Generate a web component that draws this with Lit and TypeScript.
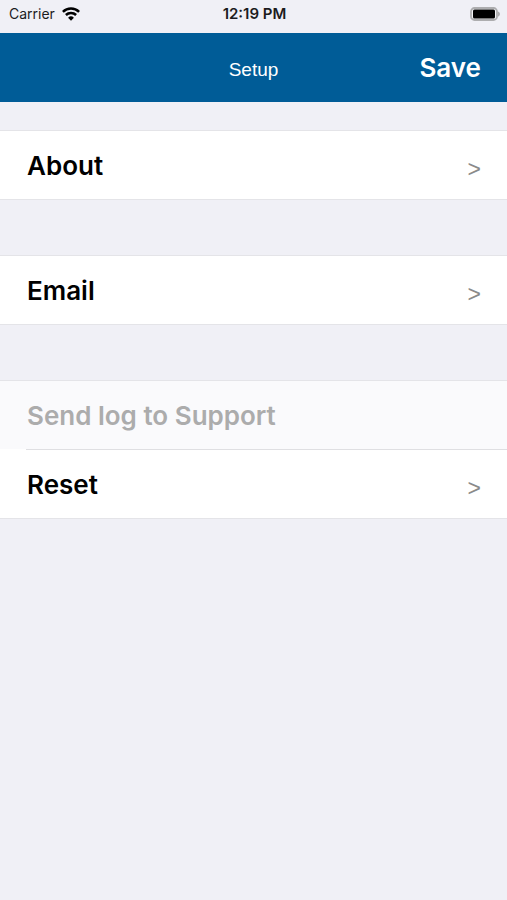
import { LitElement, html, css, nothing } from "lit";
import { customElement } from "lit/decorators.js";

interface Item {
  label: string;
  disabled?: boolean;
}

const groups: Item[][] = [
  [{ label: "About" }],
  [{ label: "Email" }],
  [{ label: "Send log to Support", disabled: true }, { label: "Reset" }],
];

@customElement("status-bar")
class StatusBar extends LitElement {
  static styles = css`
    :host {
      display: grid;
      grid-template-columns: 1fr auto 1fr;
      align-items: center;
      height: 33px;
      padding: 0 7px 6px 9px;
      box-sizing: border-box;
      font-size: 14px;
      line-height: 20px;
      color: #1c1c1e;
    }
    .carrier {
      display: flex;
      align-items: center;
      gap: 7px;
    }
    .time {
      font-size: 15px;
      font-weight: 600;
    }
    .battery {
      justify-self: end;
    }
    svg {
      display: block;
    }
  `;

  render() {
    return html`
      <div class="carrier">
        <span>Carrier</span>
        <svg width="18" height="14" viewBox="0 0 18 14" fill="none" stroke="#000" stroke-width="2.5" aria-label="Wi-Fi">
          <path d="M0.9 4.9a11.5 11.5 0 0 1 16.2 0" />
          <path d="M3.9 8a7.2 7.2 0 0 1 10.2 0" />
          <path d="M9 13.8L6.1 10.8a4.1 4.1 0 0 1 5.8 0z" fill="#000" stroke="none" />
        </svg>
      </div>
      <span class="time">12:19 PM</span>
      <svg class="battery" width="30" height="14" viewBox="0 0 30 14" aria-label="Battery full">
        <rect x="1" y="1" width="26" height="12" rx="3.5" fill="#f4f4f6" stroke="#adadaf" stroke-width="1.8" />
        <rect x="3" y="2.5" width="22" height="9" rx="1.5" fill="#000" />
        <path d="M28 4.4c2.6 1 2.6 4.2 0 5.2z" fill="#adadaf" />
      </svg>
    `;
  }
}

@customElement("app-root")
class AppRoot extends LitElement {
  static styles = css`
    :host {
      display: block;
      min-height: 100vh;
      background: #f0f0f6;
      font-family: Inter, "Liberation Sans", sans-serif;
      color: #000;
    }
    button {
      font: inherit;
      color: inherit;
      background: none;
      border: 0;
      margin: 0;
      padding: 0;
      cursor: pointer;
    }
    .bar {
      display: grid;
      grid-template-columns: 1fr auto 1fr;
      align-items: center;
      height: 69px;
      padding: 0 26px;
      background: #005c97;
      color: #fff;
    }
    .title {
      grid-column: 2;
      margin: 0;
      padding-top: 5px;
      font: 400 19px/24px "Liberation Sans", sans-serif;
    }
    .save {
      justify-self: end;
      font-size: 26px;
      line-height: 32px;
      font-weight: 600;
    }
    .groups {
      display: flex;
      flex-direction: column;
      gap: 55px;
      padding-top: 28px;
    }
    .group {
      margin: 0;
      padding: 0;
      list-style: none;
      background: #fff;
      border-top: 1px solid #e4e4e8;
      border-bottom: 1px solid #e4e4e8;
    }
    .row {
      display: flex;
      align-items: center;
      justify-content: space-between;
      width: 100%;
      height: 68px;
      padding: 2px 26px 0 27px;
      font-size: 26px;
      line-height: 32px;
      font-weight: 600;
      text-align: left;
    }
    .item + .item::before {
      content: "";
      display: block;
      height: 1px;
      margin-left: 26px;
      background: #dfdfe2;
    }
    .row:disabled {
      background: #fafafc;
      color: #acacac;
      cursor: default;
    }
    .arrow {
      padding-top: 5px;
      font: 400 23px/28px "Liberation Sans", sans-serif;
      color: #8a8a8a;
    }
  `;

  render() {
    return html`
      <status-bar></status-bar>
      <header class="bar">
        <h1 class="title">Setup</h1>
        <button class="save">Save</button>
      </header>
      <main class="groups">
        ${groups.map(
          (items) => html`
            <ul class="group">
              ${items.map(
                (item) => html`
                  <li class="item">
                    <button class="row" ?disabled=${item.disabled}>
                      <span>${item.label}</span>
                      ${item.disabled ? nothing : html`<span class="arrow" aria-hidden="true">&gt;</span>`}
                    </button>
                  </li>
                `,
              )}
            </ul>
          `,
        )}
      </main>
    `;
  }
}
